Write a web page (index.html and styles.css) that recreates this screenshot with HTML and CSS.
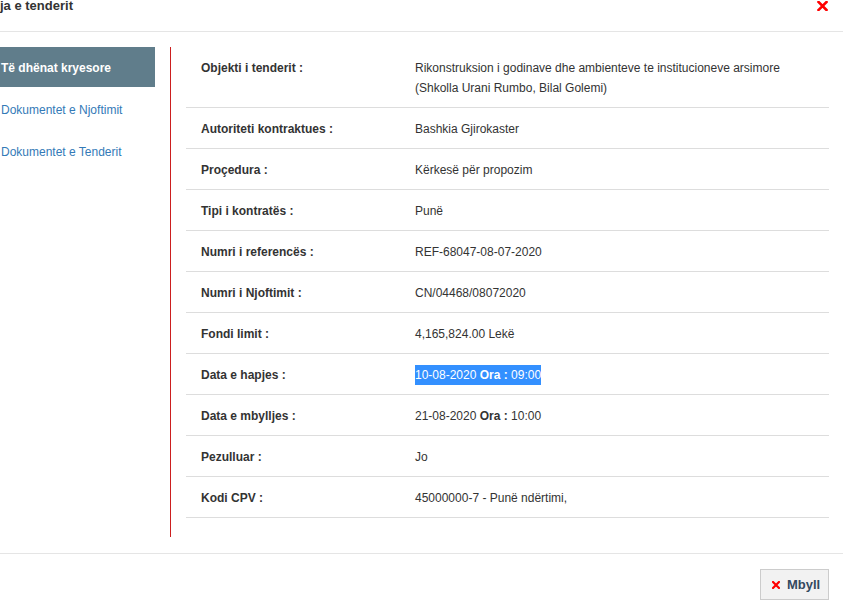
FILE: index.html
```html
<!DOCTYPE html>
<html>
<head>
<meta charset="utf-8">
<link rel="stylesheet" href="styles.css">
</head>
<body>
<div class="modal">
  <div class="modal-header">
    <div class="title">ja e tenderit</div>
    <span class="close"><svg width="11" height="10" viewBox="0 0 11 10"><path d="M1.5 1 L9.5 9 M9.5 1 L1.5 9" stroke="#ff0000" stroke-width="2.6" stroke-linecap="square"/></svg></span>
  </div>
  <div class="modal-body">
    <ul class="nav">
      <li class="active">Të dhënat kryesore</li>
      <li><a>Dokumentet e Njoftimit</a></li>
      <li><a>Dokumentet e Tenderit</a></li>
    </ul>
    <div class="content">
      <div class="row"><div class="lbl">Objekti i tenderit :</div><div class="val">Rikonstruksion i godinave dhe ambienteve te institucioneve arsimore (Shkolla Urani Rumbo, Bilal Golemi)</div></div>
      <div class="row"><div class="lbl">Autoriteti kontraktues :</div><div class="val">Bashkia Gjirokaster</div></div>
      <div class="row"><div class="lbl">Proçedura :</div><div class="val">Kërkesë për propozim</div></div>
      <div class="row"><div class="lbl">Tipi i kontratës :</div><div class="val">Punë</div></div>
      <div class="row"><div class="lbl">Numri i referencës :</div><div class="val">REF-68047-08-07-2020</div></div>
      <div class="row"><div class="lbl">Numri i Njoftimit :</div><div class="val">CN/04468/08072020</div></div>
      <div class="row"><div class="lbl">Fondi limit :</div><div class="val">4,165,824.00 Lekë</div></div>
      <div class="row"><div class="lbl">Data e hapjes :</div><div class="val"><span class="sel">10-08-2020 <b>Ora :</b> 09:00</span></div></div>
      <div class="row"><div class="lbl">Data e mbylljes :</div><div class="val">21-08-2020 <b>Ora :</b> 10:00</div></div>
      <div class="row"><div class="lbl">Pezulluar :</div><div class="val">Jo</div></div>
      <div class="row"><div class="lbl">Kodi CPV :</div><div class="val">45000000-7 - Punë ndërtimi,</div></div>
    </div>
  </div>
  <div class="modal-footer">
    <button class="btn"><svg width="8" height="8" viewBox="0 0 8 8"><path d="M1 1 L7 7 M7 1 L1 7" stroke="#ff0000" stroke-width="2.2" stroke-linecap="square"/></svg><span>Mbyll</span></button>
  </div>
</div>
</body>
</html>
```
FILE: styles.css
```css
* { box-sizing: border-box; }
html, body { margin: 0; padding: 0; background: #fff; }
body {
  font-family: "Liberation Sans", Arial, sans-serif;
  font-size: 12px;
  color: #333;
  width: 843px;
  height: 604px;
  overflow: hidden;
}
.modal-header {
  height: 32px;
  border-bottom: 1px solid #e5e5e5;
  display: flex;
  justify-content: space-between;
  align-items: flex-start;
  padding-right: 15px;
}
.title {
  font-size: 13px;
  font-weight: bold;
  line-height: 15px;
  margin-top: -2px;
  color: #333;
}
.close { display: block; margin-top: 1px; line-height: 0; }
.modal-body {
  display: flex;
  padding: 15px 14px 0 0;
  height: 521px;
}
.nav {
  list-style: none;
  margin: 0;
  padding: 0;
  width: 155px;
  flex: none;
  margin-right: 15px;
}
.nav li {
  height: 40px;
  line-height: 40px;
  padding: 1px 0 0 1px;
  margin-bottom: 2px;
}
.nav li.active {
  background: #607d8b;
  color: #fff;
  font-weight: bold;
}
.nav a { color: #337ab7; }
.content {
  flex: 1;
  border-left: 1px solid #cc1f1f;
  padding: 0 0 20px 15px;
  height: 490px;
}
.row {
  display: flex;
  border-bottom: 1px solid #dddddd;
  padding: 11px 0 9px;
  line-height: 20px;
}
.lbl {
  width: 229px;
  flex: none;
  padding-left: 15px;
  font-weight: bold;
}
.val { flex: 1; padding-right: 10px; }
.sel {
  display: inline-block;
  background: #3390ff;
  color: #fff;
  line-height: 20px;
}
.modal-footer {
  border-top: 1px solid #e5e5e5;
  display: flex;
  justify-content: flex-end;
  padding: 15px 14px 0 0;
}
.btn {
  display: flex;
  align-items: center;
  height: 31px;
  width: 69px;
  padding: 0 0 0 11px;
  background: #f2f2f2;
  border: 1px solid #cccccc;
  border-radius: 0;
  font-family: "Liberation Sans", Arial, sans-serif;
  font-size: 13px;
  font-weight: bold;
  color: #34495e;
}
.btn svg { margin-right: 7px; }
```
